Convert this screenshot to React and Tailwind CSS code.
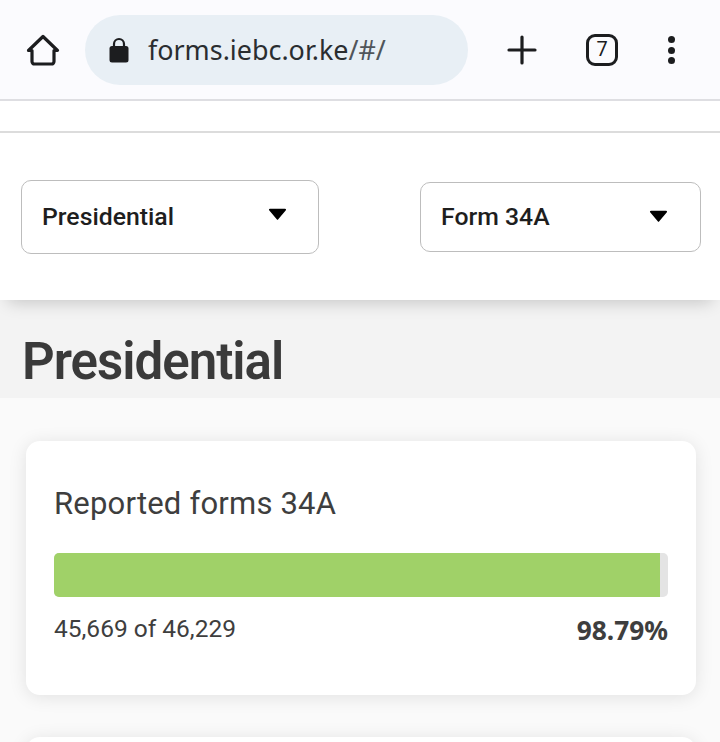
function HomeIcon() {
  return (
    <svg width="34" height="34" viewBox="0 0 34 34" fill="none" stroke="#1c1d1f" strokeWidth="3.2" strokeLinejoin="round" strokeLinecap="round">
      <path d="M2.5 17.5 17 3.5l14.5 14H28v11a2.5 2.5 0 0 1-2.5 2.5h-17A2.5 2.5 0 0 1 6 28.5v-11z" />
    </svg>
  );
}

function LockIcon() {
  return (
    <svg width="20" height="26" viewBox="0 0 20 26">
      <path d="M5 10V7a5 5 0 0 1 10 0v3" fill="none" stroke="#1c1d1f" strokeWidth="2.2" />
      <rect x="0.5" y="9" width="19" height="16.5" rx="2.5" fill="#1c1d1f" />
    </svg>
  );
}

function Caret() {
  return (
    <svg width="19" height="14" viewBox="0 0 20 14">
      <path d="M2 1.5h16a1 1 0 0 1 .8 1.6l-8 9.4a1 1 0 0 1-1.6 0l-8-9.4A1 1 0 0 1 2 1.5z" fill="#000" />
    </svg>
  );
}

function BrowserBar() {
  return (
    <div className="h-[101px] bg-[#fbfbfe] border-b-2 border-[#dedee2] flex items-center pt-[1px] font-['Noto_Sans',sans-serif]">
      <div className="w-[85px] flex justify-center">
        <HomeIcon />
      </div>
      <div className="w-[383px] h-[70px] rounded-[35px] bg-[#e8eff5] flex items-center pl-[24px]">
        <LockIcon />
        <span className="ml-[19px] text-[26.9px] leading-none text-[#2a2d30]">
          forms.iebc.or.ke<span className="text-[#50555a]">/#/</span>
        </span>
      </div>
      <div className="ml-[38px] w-[32px] h-[32px] flex items-center justify-center">
        <svg width="30" height="30" viewBox="0 0 30 30" stroke="#1c1d1f" strokeWidth="3.2" strokeLinecap="round">
          <path d="M15 2v26M2 15h26" />
        </svg>
      </div>
      <div className="ml-[48px] w-[32px] h-[32px] rounded-[9px] border-[3px] border-[#1c1d1f] flex items-center justify-center text-[20px] leading-none text-[#1c1d1f] font-['Roboto',sans-serif] pb-[2px]">
        7
      </div>
      <div className="ml-[50px] flex flex-col gap-[3.5px]">
        <span className="w-[7px] h-[7px] rounded-full bg-[#1c1d1f]" />
        <span className="w-[7px] h-[7px] rounded-full bg-[#1c1d1f]" />
        <span className="w-[7px] h-[7px] rounded-full bg-[#1c1d1f]" />
      </div>
    </div>
  );
}

function Select({ label, className, caretClass }) {
  return (
    <div className={`bg-white border-[1.5px] border-[#bdbdbd] rounded-[10px] flex items-center justify-between ${className}`}>
      <span className="text-[24.8px] leading-none font-medium text-[#1e1e1e]">{label}</span>
      <span className={caretClass}>
        <Caret />
      </span>
    </div>
  );
}

export default function App() {
  return (
    <div className="w-[720px] h-[742px] overflow-hidden bg-[#fafafa] font-['Roboto',sans-serif]">
      <BrowserBar />
      <div className="relative bg-white shadow-[0_10px_16px_-8px_rgba(0,0,0,0.2)]">
        <div className="h-[32px] border-b-2 border-[#dcdcdc]" />
        <div className="h-[167px] flex justify-between pl-[21px] pr-[19px] pt-[47px]">
          <Select
            label="Presidential"
            className="w-[298px] h-[74px] pl-[20px] pr-[31px]"
            caretClass="mb-[7px]"
          />
          <Select
            label="Form 34A"
            className="w-[281px] h-[70px] mt-[2px] pl-[20px] pr-[32px]"
            caretClass="mb-[2px]"
          />
        </div>
      </div>
      <div className="h-[98px] bg-[#f3f3f3] pl-[22px] pt-[32px]">
        <h1 className="text-[51px] leading-[60px] font-semibold tracking-[-1px] text-[#3a3a3a]">Presidential</h1>
      </div>
      <div className="pl-[26px] pt-[43px] flex flex-col gap-[42px] w-[696px]">
        <div className="h-[254px] bg-white rounded-[14px] shadow-[0_2px_18px_rgba(0,0,0,0.1)] px-[28px] pt-[45px]">
          <div className="text-[31px] leading-[36px] tracking-[0.2px] text-[#3e3e3e]">Reported forms 34A</div>
          <div className="mt-[31px] h-[44px] rounded-[5px] bg-[#e4e4e4] overflow-hidden">
            <div className="h-full w-[606px] bg-[#a0d168]" />
          </div>
          <div className="mt-[17px] flex items-start justify-between text-[#3e3e3e]">
            <span className="text-[24.5px] leading-[30px]">45,669 of 46,229</span>
            <span className="text-[26.3px] leading-[36px] font-bold mt-[-2px] font-['Noto_Sans',sans-serif]">98.79%</span>
          </div>
        </div>
        <div className="h-[100px] bg-white rounded-[14px] shadow-[0_2px_18px_rgba(0,0,0,0.1)]" />
      </div>
    </div>
  );
}
